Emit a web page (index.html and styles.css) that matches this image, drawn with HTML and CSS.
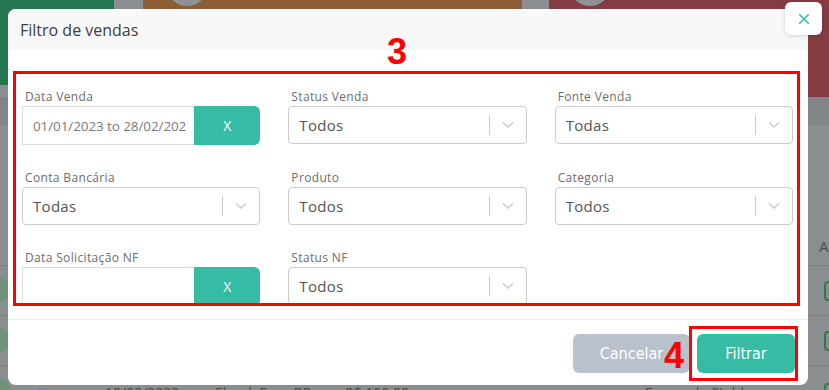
FILE: index.html
```html
<!DOCTYPE html>
<html lang="pt-BR">
<head>
<meta charset="utf-8">
<title>Filtro de vendas</title>
<link rel="stylesheet" href="styles.css">
</head>
<body>
<div class="app">
  <div class="cards">
    <div class="card card-green"></div>
    <div class="card card-brown"><span class="dot"></span></div>
    <div class="card card-red"><span class="dot"></span></div>
  </div>
  <div class="toolbar"></div>
  <table class="sales">
    <colgroup>
      <col class="c1"><col class="c2"><col class="c3"><col class="c4"><col class="c5"><col class="c6"><col class="c7">
    </colgroup>
    <thead>
      <tr><th></th><th></th><th></th><th></th><th></th><th></th><th>A</th></tr>
    </thead>
    <tbody>
      <tr><td><span class="status"></span></td><td></td><td></td><td></td><td></td><td></td><td><span class="check"></span></td></tr>
      <tr><td><span class="status"></span></td><td></td><td></td><td></td><td></td><td></td><td><span class="check"></span></td></tr>
      <tr><td><span class="status"></span><span class="tag">M</span></td><td>10/02/2023</td><td>Ebook Foco BR</td><td>R$ 100,00</td><td>-</td><td>Fernando Stahl</td><td><span class="check"></span></td></tr>
    </tbody>
  </table>
</div>

<div class="modal">
  <button class="modal-close" type="button" aria-label="Fechar">
    <svg width="14" height="14" viewBox="0 0 14 14"><path d="M2 2 L12 12 M12 2 L2 12" stroke="#36bba4" stroke-width="1.8" stroke-linecap="round" fill="none"/></svg>
  </button>
  <div class="modal-header">Filtro de vendas</div>
  <div class="modal-body">
    <div class="filter-box">
      <div class="filter-grid">
        <div class="field">
          <label class="field-label">Data Venda</label>
          <div class="date-group">
            <div class="date-input"><span>01/01/2023 to 28/02/2023</span></div>
            <button class="date-clear" type="button">X</button>
          </div>
        </div>
        <div class="field">
          <label class="field-label">Status Venda</label>
          <div class="select"><span class="select-value">Todos</span><span class="select-sep"></span><span class="select-arrow"><svg width="12" height="8" viewBox="0 0 12 8"><path d="M1 1.5 L6 6 L11 1.5" stroke="#cccccc" stroke-width="1.6" fill="none"/></svg></span></div>
        </div>
        <div class="field">
          <label class="field-label">Fonte Venda</label>
          <div class="select"><span class="select-value">Todas</span><span class="select-sep"></span><span class="select-arrow"><svg width="12" height="8" viewBox="0 0 12 8"><path d="M1 1.5 L6 6 L11 1.5" stroke="#cccccc" stroke-width="1.6" fill="none"/></svg></span></div>
        </div>
        <div class="field">
          <label class="field-label">Conta Bancária</label>
          <div class="select"><span class="select-value">Todas</span><span class="select-sep"></span><span class="select-arrow"><svg width="12" height="8" viewBox="0 0 12 8"><path d="M1 1.5 L6 6 L11 1.5" stroke="#cccccc" stroke-width="1.6" fill="none"/></svg></span></div>
        </div>
        <div class="field">
          <label class="field-label">Produto</label>
          <div class="select"><span class="select-value">Todos</span><span class="select-sep"></span><span class="select-arrow"><svg width="12" height="8" viewBox="0 0 12 8"><path d="M1 1.5 L6 6 L11 1.5" stroke="#cccccc" stroke-width="1.6" fill="none"/></svg></span></div>
        </div>
        <div class="field">
          <label class="field-label">Categoria</label>
          <div class="select"><span class="select-value">Todos</span><span class="select-sep"></span><span class="select-arrow"><svg width="12" height="8" viewBox="0 0 12 8"><path d="M1 1.5 L6 6 L11 1.5" stroke="#cccccc" stroke-width="1.6" fill="none"/></svg></span></div>
        </div>
        <div class="field">
          <label class="field-label">Data Solicitação NF</label>
          <div class="date-group">
            <div class="date-input"><span></span></div>
            <button class="date-clear" type="button">X</button>
          </div>
        </div>
        <div class="field">
          <label class="field-label">Status NF</label>
          <div class="select"><span class="select-value">Todos</span><span class="select-sep"></span><span class="select-arrow"><svg width="12" height="8" viewBox="0 0 12 8"><path d="M1 1.5 L6 6 L11 1.5" stroke="#cccccc" stroke-width="1.6" fill="none"/></svg></span></div>
        </div>
      </div>
    </div>
  </div>
  <div class="modal-footer">
    <button class="btn btn-cancel" type="button">Cancelar</button>
    <button class="btn btn-primary" type="button">Filtrar</button>
  </div>
  <span class="mark mark-3">3</span>
  <span class="mark mark-4">4</span>
  <span class="mark-box"></span>
</div>
</body>
</html>
```
FILE: styles.css
```css
* { box-sizing: border-box; }
html, body { margin: 0; padding: 0; }
body {
  width: 829px;
  height: 390px;
  overflow: hidden;
  position: relative;
  font-family: "Open Sans", "DejaVu Sans", sans-serif;
  background: #8b8e91;
}

/* ---------- backdrop page (already dimmed) ---------- */
.app { width: 829px; height: 390px; overflow: hidden; background: #8b8e91; }
.cards { display: flex; align-items: flex-start; height: 97px; }
.card { position: relative; overflow: hidden; }
.card-green { width: 114px; height: 85px; background: #237650; margin-right: 29px; }
.card-brown { width: 379px; height: 85px; background: #8d5e35; margin-right: 27px; }
.card-red { flex: 1; height: 97px; background: #843b41; }
.dot {
  display: block; width: 40px; height: 40px; border-radius: 50%;
  background: #8f9295; margin: -34px 0 0 24px;
}
.card-red .dot { margin-left: 21px; }
.toolbar { height: 28px; background: #828588; }
.sales { border-collapse: collapse; table-layout: fixed; width: 860px; color: #4a4c4e; font-size: 14px; }
.c1 { width: 105px; } .c2 { width: 110px; } .c3 { width: 130px; } .c4 { width: 120px; }
.c5 { width: 180px; } .c6 { width: 174px; } .c7 { width: 41px; }
.sales th { height: 140px; vertical-align: bottom; padding: 0 0 9px 0; text-align: left; font-weight: 400; color: #4a4c4e; font-size: 15px; }
.sales td { height: 50px; border-top: 1px solid #7e8184; padding: 0; vertical-align: middle; white-space: nowrap; }
.sales tbody tr:last-child td { vertical-align: top; padding-top: 17px; }
.status { display: inline-block; width: 24px; height: 24px; border-radius: 50%; background: #6f9279; margin-left: -13px; vertical-align: middle; }
.tag { display: inline-block; width: 11px; height: 11px; background: #6f8ea6; margin-left: 27px; font-size: 8px; color: #5a7890; vertical-align: middle; }
.check { display: inline-block; width: 14px; height: 20px; border: 2px solid #2f7a4a; border-radius: 4px; margin-left: 5px; vertical-align: middle; }
.sales tbody tr:last-child .status { margin-top: -6px; }
.sales tbody tr:last-child .check { margin-top: -2px; }

/* ---------- modal ---------- */
.modal {
  position: absolute;
  left: 8px; top: 9px;
  width: 800px; height: 376px;
  background: #ffffff;
  border-radius: 8px;
}
.modal-close {
  position: absolute; right: -14px; top: -7px;
  width: 37px; height: 33px;
  border: 0; border-radius: 6px;
  background: #ffffff;
  box-shadow: 0 1px 4px rgba(0,0,0,0.15);
  display: flex; align-items: center; justify-content: center;
  padding: 0;
}
.modal-close svg { width: 12px; height: 12px; }
.modal-header {
  height: 41px;
  background: #f8f8f8;
  border-radius: 8px 8px 0 0;
  padding: 0 12px;
  display: flex; align-items: center;
  font-size: 16px; color: #3d3d3d;
}
.modal-body { padding: 21px 8px 0 5px; }
.filter-box {
  height: 235px;
  border: 3px solid #ff0000;
  padding: 15px 4px 0 6px;
  overflow: hidden;
}
.filter-grid {
  display: grid;
  grid-template-columns: repeat(3, minmax(0, 1fr));
  column-gap: 28px;
  row-gap: 25px;
}
.field { min-width: 0; }
.field-label {
  display: block;
  font-size: 12px; line-height: 15px;
  color: #6d6d6d;
  letter-spacing: 0.35px;
  margin: 0 0 2px 3px;
}
.select {
  height: 38px;
  border: 1px solid #cccccc;
  border-radius: 4px;
  display: flex; align-items: center;
  background: #fff;
}
.select-value { flex: 1; padding-left: 10px; font-size: 15px; color: #555; letter-spacing: 0.3px; }
.select-sep { width: 1px; height: 20px; background: #cccccc; }
.select-arrow { width: 36px; display: flex; justify-content: center; align-items: center; }
.date-group { display: flex; height: 39px; }
.date-input {
  flex: 1; min-width: 0;
  border: 1px solid #dddddd; border-right: 0;
  display: flex; align-items: center;
  padding: 0 8px 0 10px;
  overflow: hidden;
}
.date-input span { white-space: nowrap; overflow: hidden; font-size: 13.5px; color: #7a7a7a; letter-spacing: -0.1px; }
.date-clear {
  width: 66px; flex: none; border: 0;
  background: #36bba4; color: #fff;
  border-radius: 0 6px 6px 0;
  font-family: "Open Sans", sans-serif; font-size: 14px;
}
.modal-footer {
  margin-top: 13px;
  border-top: 1px solid #e9ecef;
  padding: 14px 13px 0 0;
  display: flex; justify-content: flex-end; gap: 7px;
}
.btn {
  height: 39px; border: 0; border-radius: 6px;
  color: #fff;
  font-family: "Liberation Sans Narrow", "DejaVu Sans Condensed", "Open Sans", sans-serif;
  font-size: 16px;
}
.btn-cancel { width: 117px; background: #b8c1cc; }
.btn-primary { width: 98px; background: #36bba4; }

/* ---------- annotations ---------- */
.mark {
  position: absolute;
  font-family: "Liberation Sans", Arial, sans-serif;
  font-weight: 700; font-size: 36px; line-height: 36px;
  color: #ff0000;
}
.mark-3 { left: 379px; top: 25px; }
.mark-4 { left: 656px; top: 329px; }
.mark-box {
  position: absolute;
  left: 681px; top: 317px;
  width: 109px; height: 55px;
  border: 3px solid #ff0000;
}
```
